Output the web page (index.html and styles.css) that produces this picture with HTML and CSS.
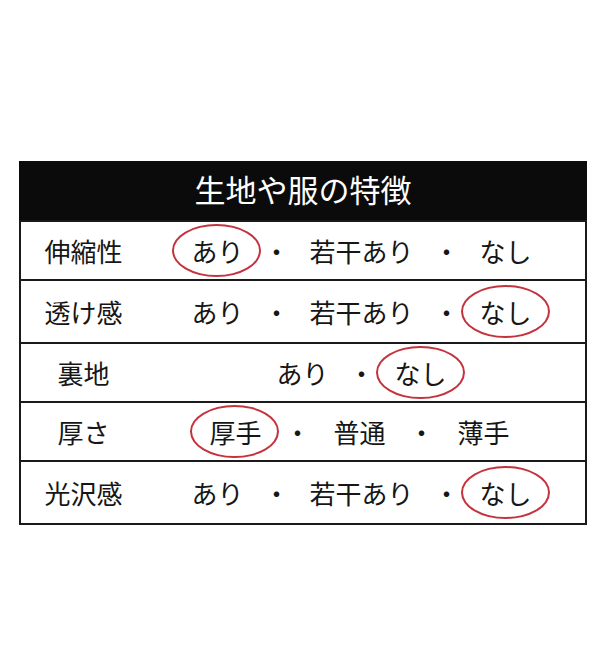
FILE: index.html
```html
<!DOCTYPE html>
<html lang="ja">
<head>
<meta charset="utf-8">
<title>生地や服の特徴</title>
<link rel="stylesheet" href="styles.css">
</head>
<body>
<div class="table">
  <div class="head">生地や服の特徴</div>
  <div class="row">
    <div class="label">伸縮性</div>
    <div class="opts">
      <span class="opt mark">あり</span><span class="dot">・</span><span class="opt">若干あり</span><span class="dot">・</span><span class="opt">なし</span>
    </div>
  </div>
  <div class="row tall">
    <div class="label">透け感</div>
    <div class="opts">
      <span class="opt">あり</span><span class="dot">・</span><span class="opt">若干あり</span><span class="dot">・</span><span class="opt mark">なし</span>
    </div>
  </div>
  <div class="row">
    <div class="label">裏地</div>
    <div class="opts">
      <span class="opt">あり</span><span class="dot">・</span><span class="opt mark">なし</span>
    </div>
  </div>
  <div class="row">
    <div class="label">厚さ</div>
    <div class="opts wide">
      <span class="opt mark">厚手</span><span class="dot">・</span><span class="opt">普通</span><span class="dot">・</span><span class="opt">薄手</span>
    </div>
  </div>
  <div class="row tall">
    <div class="label">光沢感</div>
    <div class="opts">
      <span class="opt">あり</span><span class="dot">・</span><span class="opt">若干あり</span><span class="dot">・</span><span class="opt mark">なし</span>
    </div>
  </div>
</div>
</body>
</html>
```
FILE: styles.css
```css
html, body {
  margin: 0;
  padding: 0;
  background: #ffffff;
}

body {
  font-family: "Noto Sans CJK JP", "Noto Sans", sans-serif;
  color: #161616;
}

.table {
  box-sizing: border-box;
  width: 568px;
  margin: 161px 0 0 19px;
  border: 2px solid #1a1a1a;
  border-top: 0;
}

.head {
  height: 59px;
  margin: 0 -2px;
  background: #0b0b0b;
  color: #ffffff;
  font-size: 31px;
  line-height: 56px;
  text-align: center;
}

.row {
  display: flex;
  align-items: center;
  height: 57px;
  border-top: 2px solid #1a1a1a;
}

.row.tall {
  height: 61px;
}

.label {
  width: 125px;
  text-align: center;
  font-size: 26px;
  line-height: 26px;
}

.opts {
  flex: 1;
  display: flex;
  justify-content: center;
  align-items: center;
  gap: 20px;
  padding-right: 8px;
  font-size: 26px;
  line-height: 26px;
}

.opts.wide {
  gap: 23px;
  padding-right: 12px;
}

.opt {
  position: relative;
  white-space: nowrap;
}

.mark::after {
  content: "";
  position: absolute;
  top: -14px;
  bottom: -13px;
  left: -19px;
  right: -18px;
  border: 2px solid #c4323e;
  border-radius: 50%;
}
```
